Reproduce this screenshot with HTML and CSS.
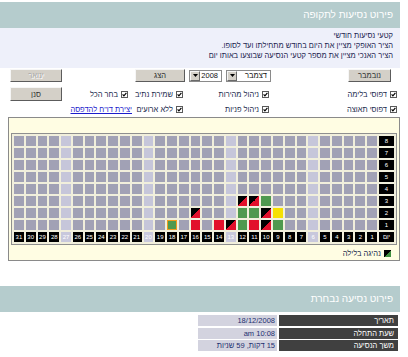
FILE: index.html
```html
<!DOCTYPE html>
<html lang="he">
<head>
<meta charset="utf-8">
<title>פירוט נסיעות לתקופה</title>
<link rel="stylesheet" href="styles.css">
</head>
<body>
<div class="page">
  <div class="hdr">פירוט נסיעות לתקופה</div>
  <div class="info">
    <div>קטעי נסיעות חודשי</div>
    <div>הציר האופקי מציין את היום בחודש מתחילתו ועד לסופו.</div>
    <div>הציר האנכי מציין את מספר קטעי הנסיעה שבוצעו באותו יום</div>
  </div>

  <div class="controls">
    <div class="crow crow1">
      <div class="cell p6"><span class="btn w43">נובמבר</span></div>
      <div class="cell p0 g4">
        <span class="sel w45"><span class="sv">דצמבר</span><span class="arr"><svg viewBox="0 0 7 4" width="5" height="3"><path d="M0 0H7L3.5 4Z" fill="#000"/></svg></span></span>
        <span class="sel w33"><span class="sv">2008</span><span class="arr"><svg viewBox="0 0 7 4" width="5" height="3"><path d="M0 0H7L3.5 4Z" fill="#000"/></svg></span></span>
      </div>
      <div class="cell p2"><span class="btn w50">הצג</span></div>
      <div class="cell"></div>
      <div class="cell p2"><span class="btn w52 dis">ינואר</span></div>
    </div>
    <div class="crow crow2">
      <div class="cell p0"><span class="ck"><span class="cb"><svg viewBox="0 0 7 7" width="7" height="7"><rect x=".5" y=".5" width="6" height="6" fill="#fff" stroke="#5a5a5a"/><path d="M1.6 3.4L2.9 4.8L5.4 1.9" fill="none" stroke="#000" stroke-width="1.2"/></svg></span>דפוסי בלימה</span></div>
      <div class="cell p2"><span class="ck"><span class="cb"><svg viewBox="0 0 7 7" width="7" height="7"><rect x=".5" y=".5" width="6" height="6" fill="#fff" stroke="#5a5a5a"/><path d="M1.6 3.4L2.9 4.8L5.4 1.9" fill="none" stroke="#000" stroke-width="1.2"/></svg></span>ניהול מהירות</span></div>
      <div class="cell p4"><span class="ck"><span class="cb"><svg viewBox="0 0 7 7" width="7" height="7"><rect x=".5" y=".5" width="6" height="6" fill="#fff" stroke="#5a5a5a"/><path d="M1.6 3.4L2.9 4.8L5.4 1.9" fill="none" stroke="#000" stroke-width="1.2"/></svg></span>שמירת נתיב</span></div>
      <div class="cell p5"><span class="ck"><span class="cb"><svg viewBox="0 0 7 7" width="7" height="7"><rect x=".5" y=".5" width="6" height="6" fill="#fff" stroke="#5a5a5a"/><path d="M1.6 3.4L2.9 4.8L5.4 1.9" fill="none" stroke="#000" stroke-width="1.2"/></svg></span>בחר הכל</span></div>
      <div class="cell p2"><span class="btn w52 tall">סנן</span></div>
    </div>
    <div class="crow crow3">
      <div class="cell p0"><span class="ck"><span class="cb"><svg viewBox="0 0 7 7" width="7" height="7"><rect x=".5" y=".5" width="6" height="6" fill="#fff" stroke="#5a5a5a"/><path d="M1.6 3.4L2.9 4.8L5.4 1.9" fill="none" stroke="#000" stroke-width="1.2"/></svg></span>דפוסי תאוצה</span></div>
      <div class="cell p2"><span class="ck"><span class="cb"><svg viewBox="0 0 7 7" width="7" height="7"><rect x=".5" y=".5" width="6" height="6" fill="#fff" stroke="#5a5a5a"/><path d="M1.6 3.4L2.9 4.8L5.4 1.9" fill="none" stroke="#000" stroke-width="1.2"/></svg></span>ניהול פניות</span></div>
      <div class="cell p4"><span class="ck"><span class="cb"><svg viewBox="0 0 7 7" width="7" height="7"><rect x=".5" y=".5" width="6" height="6" fill="#fff" stroke="#5a5a5a"/><path d="M1.6 3.4L2.9 4.8L5.4 1.9" fill="none" stroke="#000" stroke-width="1.2"/></svg></span>ללא ארועים</span></div>
      <div class="cell p1"><a class="link" href="#">יצירת דו"ח להדפסה</a></div>
      <div class="cell"></div>
    </div>
  </div>

  <div class="panel">
    <div class="frame">
      <div class="row"><b>8</b><i></i><i></i><i></i><i></i><i></i><i></i><i></i><i></i><i></i><i></i><i></i><i></i><i></i><i></i><i></i><i></i><i></i><i></i><i></i><i></i><i></i><i></i><i></i><i></i><i></i><i></i><i></i><i></i><i></i><i></i><i></i></div>
      <div class="row"><b>7</b><i></i><i></i><i></i><i></i><i></i><i></i><i></i><i></i><i></i><i></i><i></i><i></i><i></i><i></i><i></i><i></i><i></i><i></i><i></i><i></i><i></i><i></i><i></i><i></i><i></i><i></i><i></i><i></i><i></i><i></i><i></i></div>
      <div class="row"><b>6</b><i></i><i></i><i></i><i></i><i></i><i></i><i></i><i></i><i></i><i></i><i></i><i></i><i></i><i></i><i></i><i></i><i></i><i></i><i></i><i></i><i></i><i></i><i></i><i></i><i></i><i></i><i></i><i></i><i></i><i></i><i></i></div>
      <div class="row"><b>5</b><i></i><i></i><i></i><i></i><i></i><i></i><i></i><i></i><i></i><i></i><i></i><i></i><i></i><i></i><i></i><i></i><i></i><i></i><i></i><i></i><i></i><i></i><i></i><i></i><i></i><i></i><i></i><i></i><i></i><i></i><i></i></div>
      <div class="row"><b>4</b><i></i><i></i><i></i><i></i><i></i><i></i><i></i><i></i><i></i><i></i><i></i><i></i><i></i><i></i><i></i><i></i><i></i><i></i><i></i><i></i><i></i><i></i><i></i><i></i><i></i><i></i><i></i><i></i><i></i><i></i><i></i></div>
      <div class="row"><b>3</b><i></i><i></i><i></i><i></i><i></i><i></i><i></i><i></i><i></i><i class="g"></i><i class="rn"></i><i class="rn"></i><i></i><i></i><i></i><i></i><i></i><i></i><i></i><i></i><i></i><i></i><i></i><i></i><i></i><i></i><i></i><i></i><i></i><i></i><i></i></div>
      <div class="row"><b>2</b><i></i><i></i><i></i><i></i><i></i><i></i><i></i><i></i><i class="y"></i><i class="rn"></i><i class="g"></i><i class="g"></i><i></i><i></i><i></i><i class="rn"></i><i></i><i></i><i></i><i></i><i></i><i></i><i></i><i></i><i></i><i></i><i></i><i></i><i></i><i></i><i></i></div>
      <div class="row"><b>1</b><i></i><i></i><i></i><i></i><i></i><i></i><i></i><i></i><i class="g"></i><i class="rn"></i><i class="r"></i><i class="g"></i><i class="rn"></i><i class="r"></i><i></i><i class="r"></i><i></i><i class="g cur"></i><i></i><i></i><i></i><i></i><i></i><i></i><i></i><i></i><i></i><i></i><i></i><i></i><i></i></div>
      <div class="row days"><b>יום</b><b>1</b><b>2</b><b>3</b><b>4</b><b>5</b><b>6</b><b>7</b><b>8</b><b>9</b><b>10</b><b>11</b><b>12</b><b>13</b><b>14</b><b>15</b><b>16</b><b>17</b><b>18</b><b>19</b><b>20</b><b>21</b><b>22</b><b>23</b><b>24</b><b>25</b><b>26</b><b>27</b><b>28</b><b>29</b><b>30</b><b>31</b></div>
    </div>
    <div class="legend"><span class="nico"></span><span>נהיגה בלילה</span></div>
  </div>

  <div class="hdr hdr2">פירוט נסיעה נבחרת</div>
  <div class="det">
    <div class="dl">תאריך</div><div class="dv">18/12/2008</div>
    <div class="dl">שעת התחלה</div><div class="dv">10:08 am</div>
    <div class="dl">משך הנסיעה</div><div class="dv">15 דקות, 59 שניות</div>
  </div>
</div>
</body>
</html>
```

FILE: styles.css
```css
html, body {
  margin: 0;
  background: #fff;
}
body {
  font-family: "Liberation Sans", Arial, "DejaVu Sans", sans-serif;
  font-size: 7.5px;
  color: #222c4e;
}
.page {
  width: 400px;
  direction: rtl;
  padding-top: 2px;
}
.hdr {
  height: 26px;
  line-height: 26px;
  background: #b5cccd;
  color: #fff;
  font-size: 10px;
  padding-right: 7px;
}
.hdr2 {
  margin-top: 25px;
}
.info {
  background: #eef0fa;
  color: #1b2450;
  line-height: 10px;
  padding: 3px 7px 7px 0;
}

/* controls */
.controls {
  padding-right: 3px;
}
.crow {
  display: grid;
  grid-template-columns: 126px 84px 54px 69px 56px;
}
.crow1 { height: 13px; margin-top: 1px; }
.crow2 { height: 14px; margin-top: 5px; }
.crow3 { height: 10px; margin-top: 3px; }
.cell {
  display: flex;
  align-items: center;
}
.p0 { padding-right: 0; }
.p1 { padding-right: 1px; }
.p2 { padding-right: 2px; }
.p4 { padding-right: 4px; }
.p5 { padding-right: 5px; }
.p6 { padding-right: 6px; }
.g4 { gap: 4px; }

.btn {
  box-sizing: border-box;
  height: 13px;
  background: #d4d0c8;
  border: 1px solid;
  border-color: #f6f6f6 #5c5c5c #5c5c5c #f6f6f6;
  display: flex;
  align-items: center;
  justify-content: center;
  color: #303030;
}
.btn.tall { height: 14px; }
.btn.dis { color: #a8a8a8; text-shadow: 1px 1px 0 #fff; }
.w43 { width: 43px; }
.w50 { width: 50px; }
.w52 { width: 52px; }
.w45 { width: 45px; }
.w33 { width: 33px; }

.sel {
  box-sizing: border-box;
  height: 12px;
  border: 1px solid #8a8a8a;
  background: #fff;
  display: flex;
  align-items: center;
  justify-content: space-between;
  color: #111;
}
.sv {
  padding-right: 3px;
}
.arr {
  box-sizing: border-box;
  width: 10px;
  height: 10px;
  background: #d4d0c8;
  border: 1px solid;
  border-color: #f6f6f6 #6a6a6a #6a6a6a #f6f6f6;
  display: flex;
  align-items: center;
  justify-content: center;
}
.arr svg { display: block; }

.ck {
  display: flex;
  align-items: center;
  gap: 3px;
  color: #222c4e;
  white-space: nowrap;
}
.cb svg { display: block; }
.link {
  color: #1c1ccc;
  text-decoration: underline;
  white-space: nowrap;
}

/* panel with chart */
.panel {
  margin-left: 8px;
  margin-top: 3px;
  border: 1px solid #8a8a8a;
  background: #fffde3;
  padding: 15px 2px 2px 2px;
}
.frame {
  border: 1px solid #8f8f8f;
  background: #f1efdc;
  padding: 2px;
  display: flex;
  flex-direction: column;
  gap: 2px;
}
.row {
  display: grid;
  grid-template-columns: 15px repeat(31, 1fr);
  gap: 2px;
  height: 10px;
}
.row > i {
  display: block;
  background: #a1a1b5;
}
.row > i:nth-child(7n):not([class]) {
  background: #c6c6da;
}
.row > b {
  background: #000;
  color: #fff;
  font-weight: normal;
  font-size: 6px;
  line-height: 1;
  display: flex;
  align-items: center;
  justify-content: center;
  overflow: hidden;
}
.days > b:nth-child(7n) {
  background: #c8c8dc;
}
.row > i.g { background: #4f994f; }
.row > i.r { background: #e2102b; }
.row > i.y { background: #f6e000; }
.row > i.rn { background: linear-gradient(to bottom right, #000 50%, #e2102b 50%); }
.row > i.cur { box-shadow: inset 0 0 0 1px #ef9a1e; }

.legend {
  display: flex;
  align-items: center;
  gap: 3px;
  height: 10px;
  margin-top: 3px;
  padding-right: 6px;
}
.nico {
  width: 7px;
  height: 7px;
  background: linear-gradient(to bottom right, #000 50%, #3f8f3f 50%);
}

/* details */
.det {
  width: 200px;
  margin: 3px 2px 0 0;
  display: grid;
  grid-template-columns: 119px 79px;
  column-gap: 2px;
  row-gap: 1.5px;
}
.det > div {
  height: 11px;
  line-height: 11px;
  white-space: nowrap;
}
.dl {
  background: #404040;
  color: #fff;
  padding-right: 4px;
}
.dv {
  background: #d3d3df;
  color: #1d2f6f;
  padding-right: 2px;
}
```
